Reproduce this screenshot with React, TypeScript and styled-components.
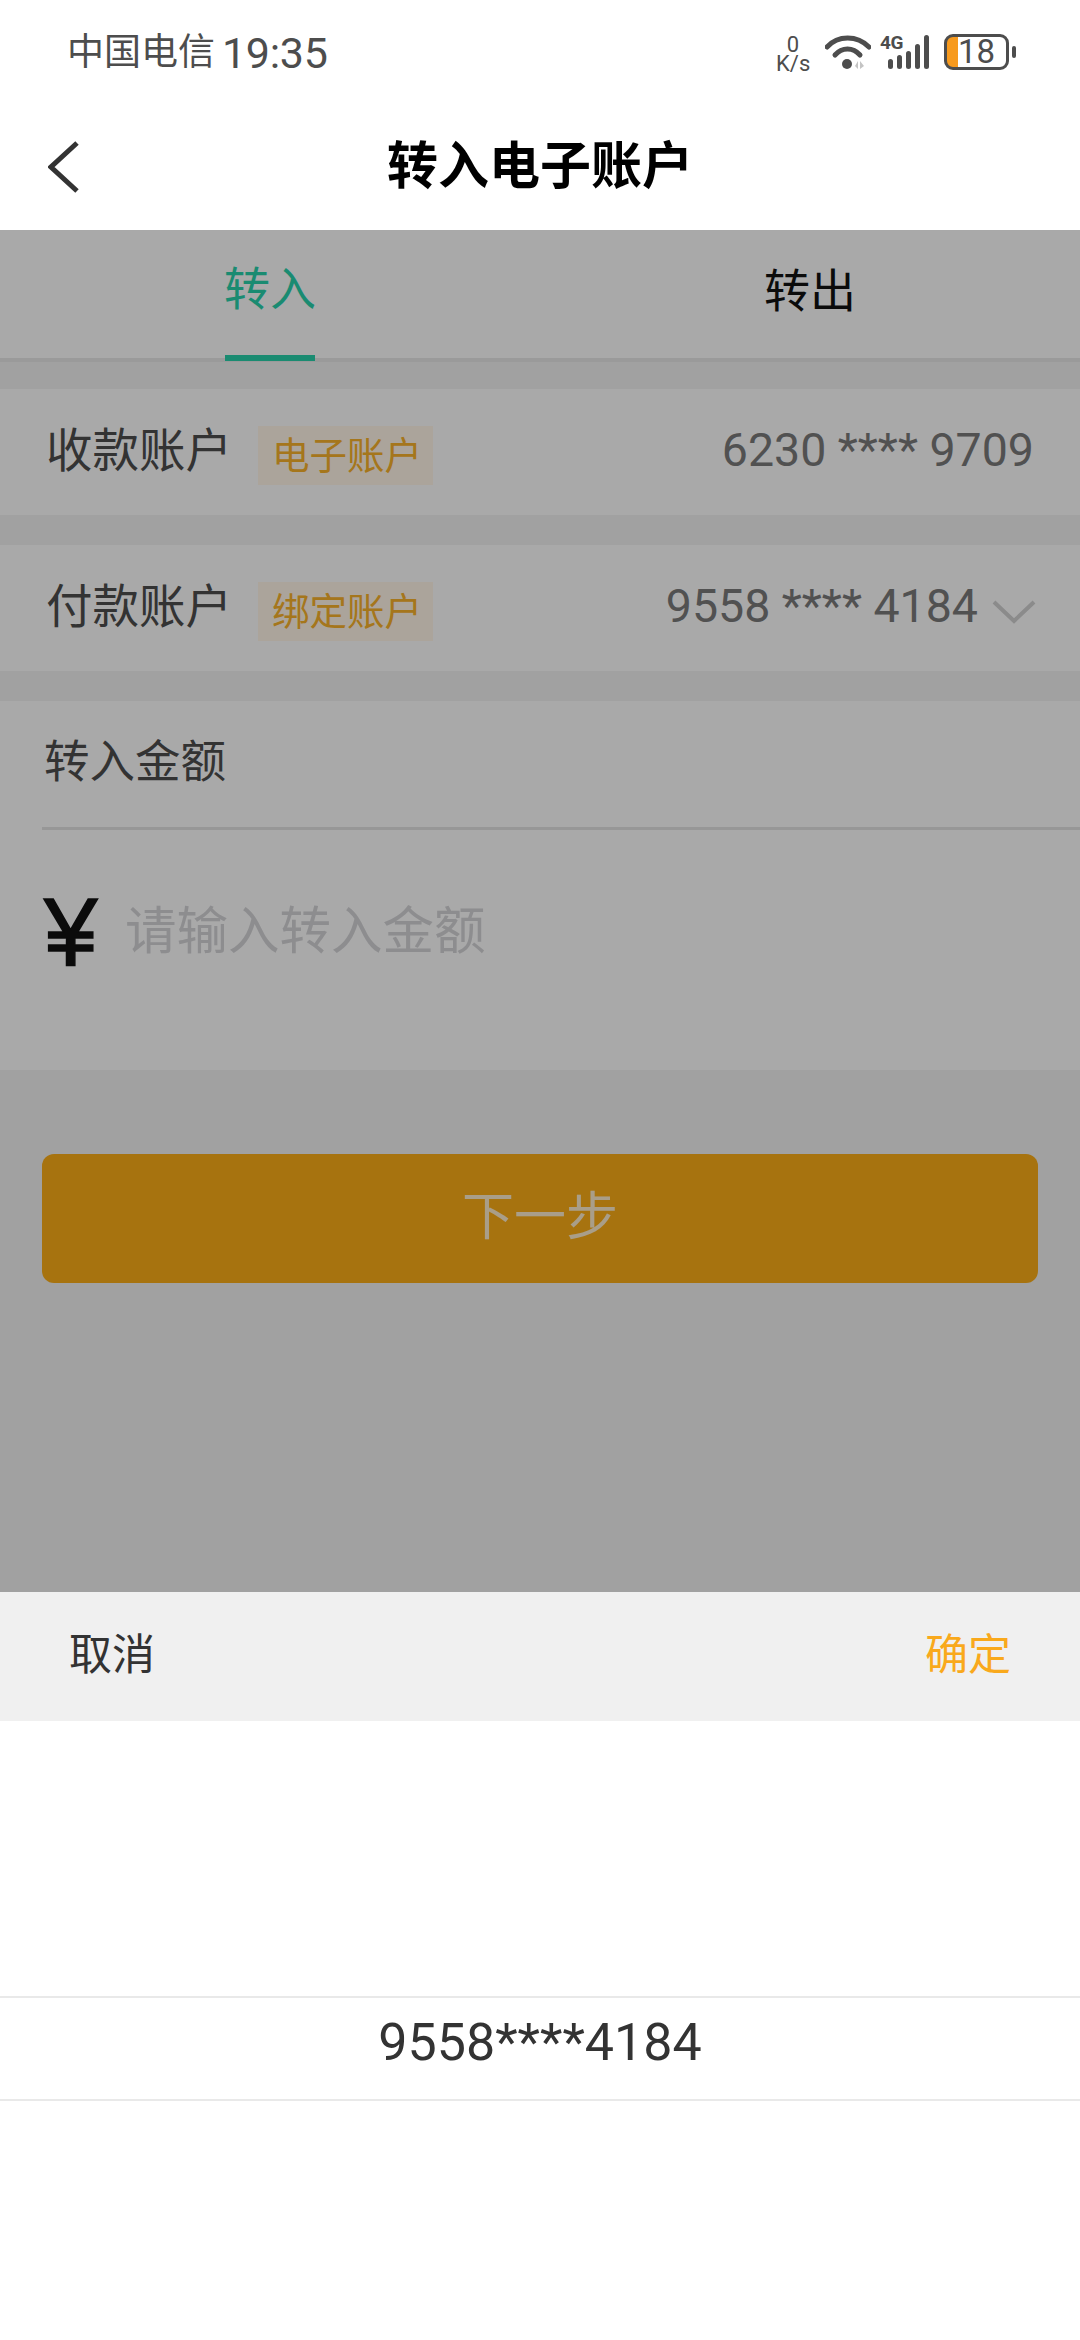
import React from "react";
import styled, { createGlobalStyle } from "styled-components";

const Global = createGlobalStyle`
  html, body { margin: 0; padding: 0; background: #fff; }
  * { box-sizing: border-box; }
  body { font-family: Roboto, "Noto Sans CJK SC", sans-serif; }
`;

const Page = styled.div`
  width: 1080px;
  height: 2340px;
  display: flex;
  flex-direction: column;
  overflow: hidden;
  background: #fff;
`;

const StatusBar = styled.div`
  height: 104px;
  display: flex;
  align-items: center;
  justify-content: space-between;
  padding: 0 64px 0 67px;
  color: #4d4d4d;
`;

const Carrier = styled.div`
  font-size: 37px;
  line-height: 104px;
  margin-top: 2px;
  display: flex;
  align-items: center;
  gap: 7px;
`;

const Clock = styled.span`
  font-size: 43px;
  letter-spacing: -0.3px;
`;

const StatusIcons = styled.div`
  display: flex;
  align-items: center;
  gap: 9px;
`;

const Speed = styled.div`
  width: 34px;
  margin-right: 6px;
  margin-top: 3px;
  font-size: 22px;
  line-height: 19px;
  text-align: center;
  color: #4d4d4d;
  font-family: Roboto, sans-serif;
`;

const Signal = styled.div`
  position: relative;
  width: 52px;
  height: 36px;
`;

const SignalLabel = styled.span`
  position: absolute;
  left: 0;
  top: -2px;
  font-size: 19px;
  line-height: 22px;
  font-weight: 700;
  letter-spacing: -0.5px;
  color: #4d4d4d;
  font-family: Roboto, sans-serif;
`;

const Battery = styled.div`
  width: 65px;
  height: 36px;
  border: 3px solid #4d4d4d;
  border-radius: 9px;
  font-size: 33px;
  line-height: 30px;
  padding-left: 11px;
  color: #4d4d4d;
  background: linear-gradient(90deg, #f79a1e 11px, transparent 11px);
  margin-left: 3px;
`;

const BatteryNub = styled.div`
  width: 4px;
  height: 12px;
  border-radius: 2px;
  background: #4d4d4d;
  margin-left: -6px;
`;

const NavBar = styled.div`
  height: 126px;
  display: flex;
  align-items: center;
  justify-content: center;
  position: relative;
`;

const Back = styled.svg`
  position: absolute;
  left: 48px;
  top: 37px;
`;

const Title = styled.h1`
  margin: 0;
  font-size: 51px;
  line-height: 60px;
  font-weight: 700;
  color: #000;
`;

const Main = styled.div`
  position: relative;
  flex: 1;
  background: #f0f0f0;
`;

const Dim = styled.div`
  position: absolute;
  inset: 0;
  background: rgba(0, 0, 0, 0.33);
`;

const Tabs = styled.div`
  height: 132px;
  display: grid;
  grid-template-columns: 1fr 1fr;
  background: #fcfcfd;
  border-bottom: 4px solid #e6e6e6;
  margin-bottom: 27px;
`;

const Tab = styled.div<{ $active?: boolean }>`
  position: relative;
  display: flex;
  justify-content: center;
  padding-top: ${(p) => (p.$active ? 27 : 29)}px;
  font-size: 46px;
  line-height: 65px;
  color: ${(p) => (p.$active ? "#27cfa9" : "#111")};
`;

const TabBar = styled.div`
  position: absolute;
  left: 225px;
  bottom: -3px;
  width: 90px;
  height: 6px;
  background: #27cfa9;
`;

const Row = styled.div`
  height: 126px;
  background: #fcfcfd;
  margin-bottom: 30px;
  padding: 0 46px;
  display: flex;
  align-items: center;
`;

const Label = styled.div`
  font-size: 46.5px;
  line-height: 60px;
  margin-top: -2px;
  color: #4c4c4c;
`;

const Tag = styled.div`
  width: 175px;
  height: 59px;
  margin-left: 26px;
  margin-top: 6px;
  padding: 0 0 6px 3px;
  display: flex;
  align-items: center;
  justify-content: center;
  font-size: 37.5px;
  color: #f7b02a;
  background: #fff5e8;
`;

const Value = styled.div`
  margin-left: auto;
  font-size: 46.5px;
  line-height: 60px;
  margin-top: -4px;
  color: #797979;
  white-space: pre;
`;

const Chevron = styled.svg`
  margin-left: 14px;
  margin-top: 8px;
  margin-right: -2px;
`;

const AmountPanel = styled.div`
  height: 369px;
  background: #fcfcfd;
  padding-left: 42px;
`;

const AmountTitle = styled.div`
  height: 129px;
  padding: 29px 0 0 2px;
  font-size: 45.5px;
  line-height: 65px;
  color: #4c4c4c;
  border-bottom: 3px solid #e2e2e2;
`;

const AmountInput = styled.div`
  display: flex;
  align-items: center;
  padding-top: 47px;
`;

const Yen = styled.span`
  width: 81px;
  margin-left: 2px;
  font-size: 96px;
  line-height: 110px;
  -webkit-text-stroke: 1.5px #111;
  color: #111;
  font-family: "Liberation Sans", sans-serif;
`;

const Placeholder = styled.span`
  font-size: 51.5px;
  line-height: 80px;
  margin-top: -1px;
  color: #d3d3d5;
`;

const NextButton = styled.div`
  height: 129px;
  margin: 84px 42px 0 42px;
  border-radius: 12px;
  background: #f9ac17;
  color: #fff;
  display: flex;
  align-items: center;
  justify-content: center;
  padding-bottom: 12px;
  font-size: 52px;
`;

const NextLabel = styled.span`
  opacity: 0.78;
`;

const Sheet = styled.div`
  height: 748px;
  background: #fff;
`;

const SheetHeader = styled.div`
  height: 129px;
  background: #f0f0f0;
  display: flex;
  align-items: center;
  justify-content: space-between;
  padding: 0 69px 12px 69px;
`;

const SheetAction = styled.span<{ $primary?: boolean }>`
  font-size: 43px;
  color: ${(p) => (p.$primary ? "#f9a91c" : "#333")};
`;

const Picker = styled.div`
  padding-top: 275px;
`;

const PickerItem = styled.div`
  height: 105px;
  border-top: 2px solid #e9e9e9;
  border-bottom: 2px solid #e9e9e9;
  display: flex;
  align-items: center;
  justify-content: center;
  padding-bottom: 12px;
  font-size: 52px;
  color: #333;
`;

export default function App() {
  return (
    <Page>
      <Global />
      <StatusBar>
        <Carrier>
          中国电信<Clock>19:35</Clock>
        </Carrier>
        <StatusIcons>
          <Speed>
            0
            <br />
            K/s
          </Speed>
          <svg width="46" height="36" viewBox="0 0 46 36">
            <path d="M2 13 C13 1 32 1 44 13" fill="none" stroke="#4d4d4d" strokeWidth="5" strokeLinecap="round" />
            <path d="M10 21 C17 13 28 13 35 21" fill="none" stroke="#4d4d4d" strokeWidth="5" strokeLinecap="round" />
            <circle cx="22" cy="30" r="5" fill="#4d4d4d" />
            <path d="M30 32 L33 27 V35 Z M35 27 L39 32 L35 35 Z" fill="#c4c4c4" />
          </svg>
          <Signal>
            <svg width="52" height="36" viewBox="0 0 52 36">
              <rect x="8" y="25" width="5" height="10" rx="2.5" fill="#4d4d4d" />
              <rect x="17" y="21" width="5" height="14" rx="2.5" fill="#4d4d4d" />
              <rect x="26" y="17" width="5" height="18" rx="2.5" fill="#4d4d4d" />
              <rect x="35" y="10" width="5" height="25" rx="2.5" fill="#4d4d4d" />
              <rect x="44" y="1" width="5" height="34" rx="2.5" fill="#4d4d4d" />
            </svg>
            <SignalLabel>4G</SignalLabel>
          </Signal>
          <Battery>18</Battery>
          <BatteryNub />
        </StatusIcons>
      </StatusBar>
      <NavBar>
        <Back width="34" height="52" viewBox="0 0 34 52">
          <path d="M29 2 L3 26 L29 50" fill="none" stroke="#333" strokeWidth="5" />
        </Back>
        <Title>转入电子账户</Title>
      </NavBar>
      <Main>
        <Tabs>
          <Tab $active>
            转入
            <TabBar />
          </Tab>
          <Tab>转出</Tab>
        </Tabs>
        <Row>
          <Label>收款账户</Label>
          <Tag>电子账户</Tag>
          <Value>6230 **** 9709</Value>
        </Row>
        <Row>
          <Label>付款账户</Label>
          <Tag>绑定账户</Tag>
          <Value>9558 **** 4184</Value>
          <Chevron width="44" height="24" viewBox="0 0 44 24">
            <path d="M2 2 L22 21 L42 2" fill="none" stroke="#cfcfcf" strokeWidth="4" />
          </Chevron>
        </Row>
        <AmountPanel>
          <AmountTitle>转入金额</AmountTitle>
          <AmountInput>
            <Yen>¥</Yen>
            <Placeholder>请输入转入金额</Placeholder>
          </AmountInput>
        </AmountPanel>
        <NextButton>
          <NextLabel>下一步</NextLabel>
        </NextButton>
        <Dim />
      </Main>
      <Sheet>
        <SheetHeader>
          <SheetAction>取消</SheetAction>
          <SheetAction $primary>确定</SheetAction>
        </SheetHeader>
        <Picker>
          <PickerItem>9558****4184</PickerItem>
        </Picker>
      </Sheet>
    </Page>
  );
}
